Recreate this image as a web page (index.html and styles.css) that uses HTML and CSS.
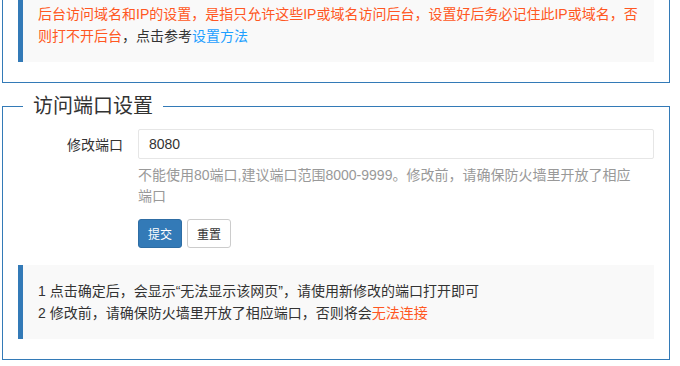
FILE: index.html
```html
<!DOCTYPE html>
<html lang="zh">
<head>
  <meta charset="UTF-8" />
  <meta name="viewport" content="width=device-width, initial-scale=1" />
  <title>访问设置</title>
  <link rel="stylesheet" href="styles.css">
</head>
<body>
  <div class="page">
    <fieldset class="field field-cut">
      <div class="quote">
        <span class="warn">后台访问域名和IP的设置，是指只允许这些IP或域名访问后台，设置好后务必记住此IP或域名，否则打不开后台</span>，点击参考<a href="#" class="link">设置方法</a>
      </div>
    </fieldset>

    <fieldset class="field">
      <legend>访问端口设置</legend>
      <form class="field-box" onsubmit="return false;">
        <div class="form-row">
          <label class="form-label" for="port">修改端口</label>
          <div class="form-block">
            <input type="text" id="port" class="input" value="8080" />
          </div>
        </div>
        <div class="form-help">不能使用80端口,建议端口范围8000-9999。修改前，请确保防火墙里开放了相应端口</div>
        <div class="form-btns">
          <button type="submit" class="btn btn-primary">提交</button>
          <button type="reset" class="btn btn-default">重置</button>
        </div>
        <div class="quote quote-tip">
          1 点击确定后，会显示“无法显示该网页”，请使用新修改的端口打开即可<br>
          2 修改前，请确保防火墙里开放了相应端口，否则将会<span class="warn">无法连接</span>
        </div>
      </form>
    </fieldset>
  </div>
</body>
</html>
```

FILE: styles.css
```css
body { margin: 0; background: #fff; color: #333; font-family: "Liberation Sans", "Noto Sans CJK SC", sans-serif; font-size: 14px; }
.page { width: 668px; margin: -12px 0 0 2px; }

.field { margin: 0; padding: 0 15px 20px; border: 1px solid #337ab7; min-width: 0; }
.field-cut { border-top: 0; }
.field + .field { margin-top: 9px; }
.field legend { margin-left: 5px; padding: 0 10px; font-size: 20px; font-weight: normal; line-height: 28px; color: #333; }
.field-box { padding-top: 9px; }

.quote { padding: 15px; line-height: 22px; border-left: 5px solid #337ab7; background: #f9f9f9; }
.quote-tip { margin-top: 17px; color: #333; }
.warn { color: #ff5722; }
.link { color: #1e9fff; text-decoration: none; }

.form-row { display: flex; align-items: center; }
.form-label { width: 120px; padding-right: 15px; box-sizing: border-box; text-align: right; }
.form-block { flex: 1; }
.input { display: block; width: 100%; height: 30px; box-sizing: border-box; padding: 0 10px; border: 1px solid #e6e6e6; border-radius: 2px; font: 14px "Liberation Sans", "Noto Sans CJK SC", sans-serif; color: #333; outline: none; }

.form-help { margin: 6px 0 0 120px; padding-right: 20px; line-height: 21px; color: #999; }
.form-btns { display: flex; gap: 5px; margin: 12px 0 0 120px; }
.btn { height: 29px; padding: 0 9px; border: 1px solid transparent; border-radius: 3px; font: 12px "Liberation Sans", "Noto Sans CJK SC", sans-serif; cursor: pointer; }
.btn-primary { background: #337ab7; border-color: #2e6da4; color: #fff; }
.btn-default { background: #fff; border-color: #ccc; color: #333; }
```
